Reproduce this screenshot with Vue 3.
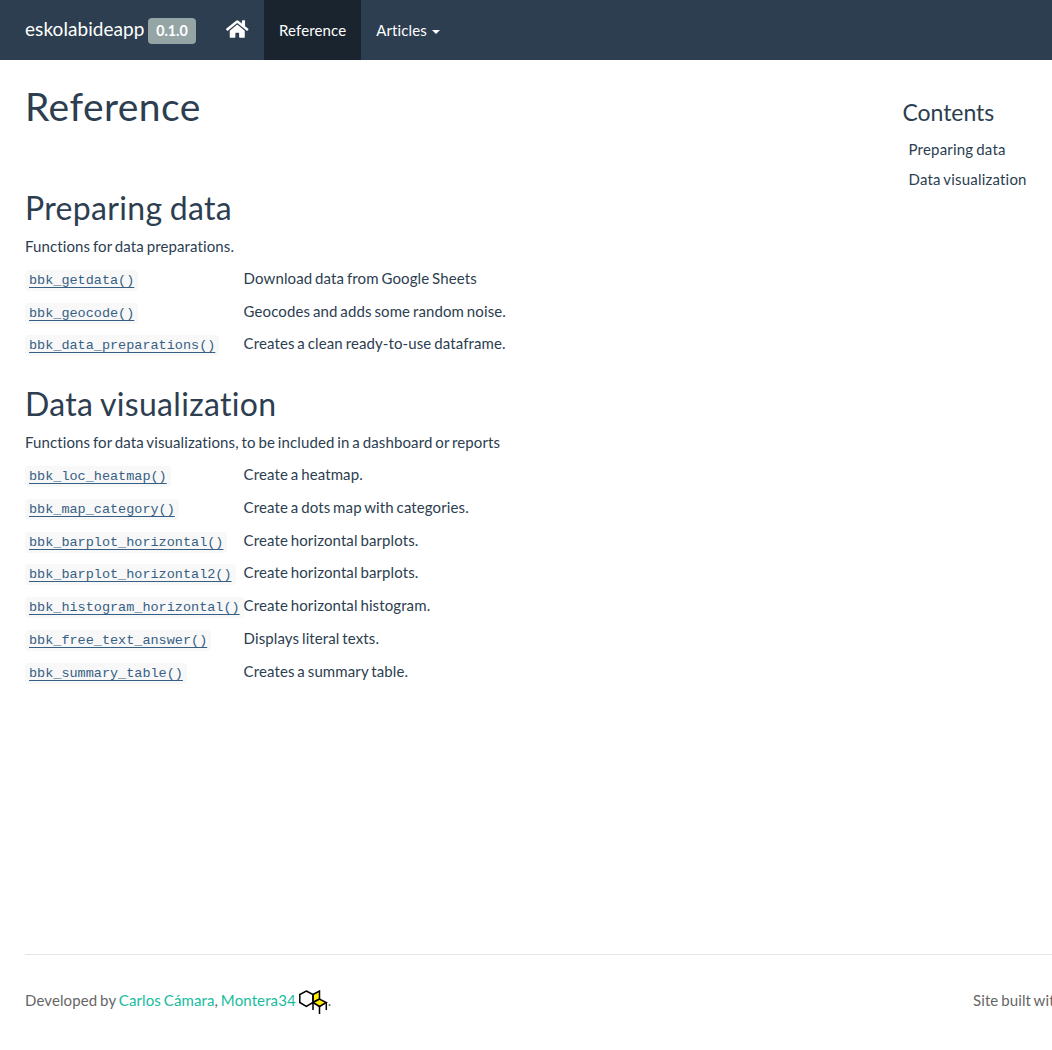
<script setup>
const sections = [
  {
    title: 'Preparing data',
    desc: 'Functions for data preparations.',
    rows: [
      ['bbk_getdata()', 'Download data from Google Sheets'],
      ['bbk_geocode()', 'Geocodes and adds some random noise.'],
      ['bbk_data_preparations()', 'Creates a clean ready-to-use dataframe.'],
    ],
  },
  {
    title: 'Data visualization',
    desc: 'Functions for data visualizations, to be included in a dashboard or reports',
    rows: [
      ['bbk_loc_heatmap()', 'Create a heatmap.'],
      ['bbk_map_category()', 'Create a dots map with categories.'],
      ['bbk_barplot_horizontal()', 'Create horizontal barplots.'],
      ['bbk_barplot_horizontal2()', 'Create horizontal barplots.'],
      ['bbk_histogram_horizontal()', 'Create horizontal histogram.'],
      ['bbk_free_text_answer()', 'Displays literal texts.'],
      ['bbk_summary_table()', 'Creates a summary table.'],
    ],
  },
]
</script>

<template>
  <div class="page">
    <nav class="navbar">
      <div class="brand">
        <a class="brand-name">eskolabideapp</a>
        <span class="version">0.1.0</span>
      </div>
      <a class="nav-item home">
        <svg width="22.5" height="20" viewBox="0 0 576 512" fill="currentColor">
          <path d="M280.37 148.26L96 300.11V464a16 16 0 0 0 16 16l112.06-.29a16 16 0 0 0 15.92-16V368a16 16 0 0 1 16-16h64a16 16 0 0 1 16 16v95.64a16 16 0 0 0 16 16.05L464 480a16 16 0 0 0 16-16V300L295.67 148.26a12.19 12.19 0 0 0-15.3 0zM571.6 251.47L488 182.56V44.05a12 12 0 0 0-12-12h-56a12 12 0 0 0-12 12v72.61L318.47 43a48 48 0 0 0-61 0L4.34 251.47a12 12 0 0 0-1.6 16.9l25.5 31A12 12 0 0 0 45.15 301l235.22-193.74a12.19 12.19 0 0 1 15.3 0L530.9 301a12 12 0 0 0 16.9-1.6l25.5-31a12 12 0 0 0-1.7-16.93z" />
        </svg>
      </a>
      <a class="nav-item active">Reference</a>
      <a class="nav-item">Articles <span class="caret"></span></a>
    </nav>

    <div class="body">
      <main>
        <h1>Reference</h1>
        <section v-for="s in sections" :key="s.title">
          <h2>{{ s.title }}</h2>
          <p class="desc">{{ s.desc }}</p>
          <div v-for="r in s.rows" :key="r[0]" class="row">
            <div class="fn"><code><a>{{ r[0] }}</a></code></div>
            <div>{{ r[1] }}</div>
          </div>
        </section>
      </main>
      <aside>
        <h3>Contents</h3>
        <a v-for="s in sections" :key="s.title">{{ s.title }}</a>
      </aside>
    </div>

    <footer>
      <p class="dev">
        Developed by <a>Carlos Cámara</a>, <a>Montera34
        <svg class="logo" width="29" height="24" viewBox="0 0 29 24" stroke="#000" stroke-width="1.5" fill="none">
          <path d="M14 4.5L20.5 1V9L14 12.5Z" fill="#ffed00" />
          <path d="M14 12.5L20.5 9L27.3 12.5L20.5 16.5Z" fill="#ffed00" />
          <path d="M7.3 1L14 4.5V12.5L7.3 16.3L0.8 12.5V4.5Z" />
          <path d="M14 12.5V20M20.5 16.5V24M27.3 12.5V20" />
        </svg></a>.
      </p>
      <p class="built">Site built with</p>
    </footer>
  </div>
</template>

<style>
body { margin: 0; background: #fff; }
</style>

<style scoped>
.page {
  height: 1050px;
  overflow: hidden;
  display: flex;
  flex-direction: column;
  font: 15px/21.43px Lato, sans-serif;
  font-variant-ligatures: none;
  letter-spacing: 0.11px;
  word-spacing: -1.1px;
  color: #2c3e50;
}
.navbar {
  height: 60px;
  flex: none;
  display: flex;
  background: #2c3e50;
  color: #fff;
}
.brand {
  width: 186px;
  padding-left: 25px;
  display: flex;
  align-items: flex-start;
}
.brand-name {
  width: 123px;
  font-size: 19px;
  line-height: 21px;
  padding-top: 18px;
  letter-spacing: 0.06px;
}
.version {
  box-sizing: border-box;
  width: 48px;
  height: 26px;
  margin-top: 18px;
  border-radius: 4px;
  background: #95a5a6;
  font-size: 14.25px;
  font-weight: 700;
  line-height: 26px;
  letter-spacing: 0;
  text-align: center;
}
.nav-item {
  padding: 19.5px 15px;
  height: 21px;
  line-height: 21px;
  letter-spacing: 0.13px;
  word-spacing: 0;
  white-space: nowrap;
}
.home { width: 23px; }
.home svg { display: block; margin-top: -1px; }
.active { background: #1a242f; }
.caret {
  display: inline-block;
  margin-left: 1px;
  vertical-align: middle;
  border-top: 4px solid;
  border-left: 4px solid transparent;
  border-right: 4px solid transparent;
}
.body {
  height: 894px;
  flex: none;
  display: flex;
  justify-content: space-between;
  padding-left: 25px;
}
h1, h2, h3 { font-weight: 400; margin: 0; }
h1 { font-size: 39px; line-height: 43px; padding-top: 25px; margin-bottom: 59px; letter-spacing: 0.45px; }
h2 { font-size: 32px; line-height: 35px; padding-top: 3px; letter-spacing: 0.32px; }
.desc { margin: 10.9px 0 10.5px; }
section { margin-bottom: 16.9px; }
.row { display: flex; height: 32.8px; }
.fn { width: 218.6px; }
code {
  padding: 3px 4px;
  border-radius: 4px;
  background: #f8f8f8;
  font: 13.5px "Liberation Mono", monospace;
  letter-spacing: 0;
}
code a { color: #375f84; text-decoration: underline; text-underline-offset: 3px; text-decoration-thickness: 1px; }
aside { width: 149.5px; display: flex; flex-direction: column; }
h3 { font-size: 23px; line-height: 25px; padding-top: 40px; margin-bottom: 8.5px; letter-spacing: -0.05px; }
aside a { padding: 4px 6px; line-height: 22px; letter-spacing: 0.2px; }
footer {
  display: flex;
  justify-content: space-between;
  margin-left: 25px;
  padding-top: 35px;
  border-top: 1px solid #e5e5e5;
  color: #666;
}
footer p { margin: 0; white-space: nowrap; }
footer a { color: #18bc9c; }
.built { width: 79px; }
.logo { vertical-align: middle; margin: -2px 0; }
</style>
